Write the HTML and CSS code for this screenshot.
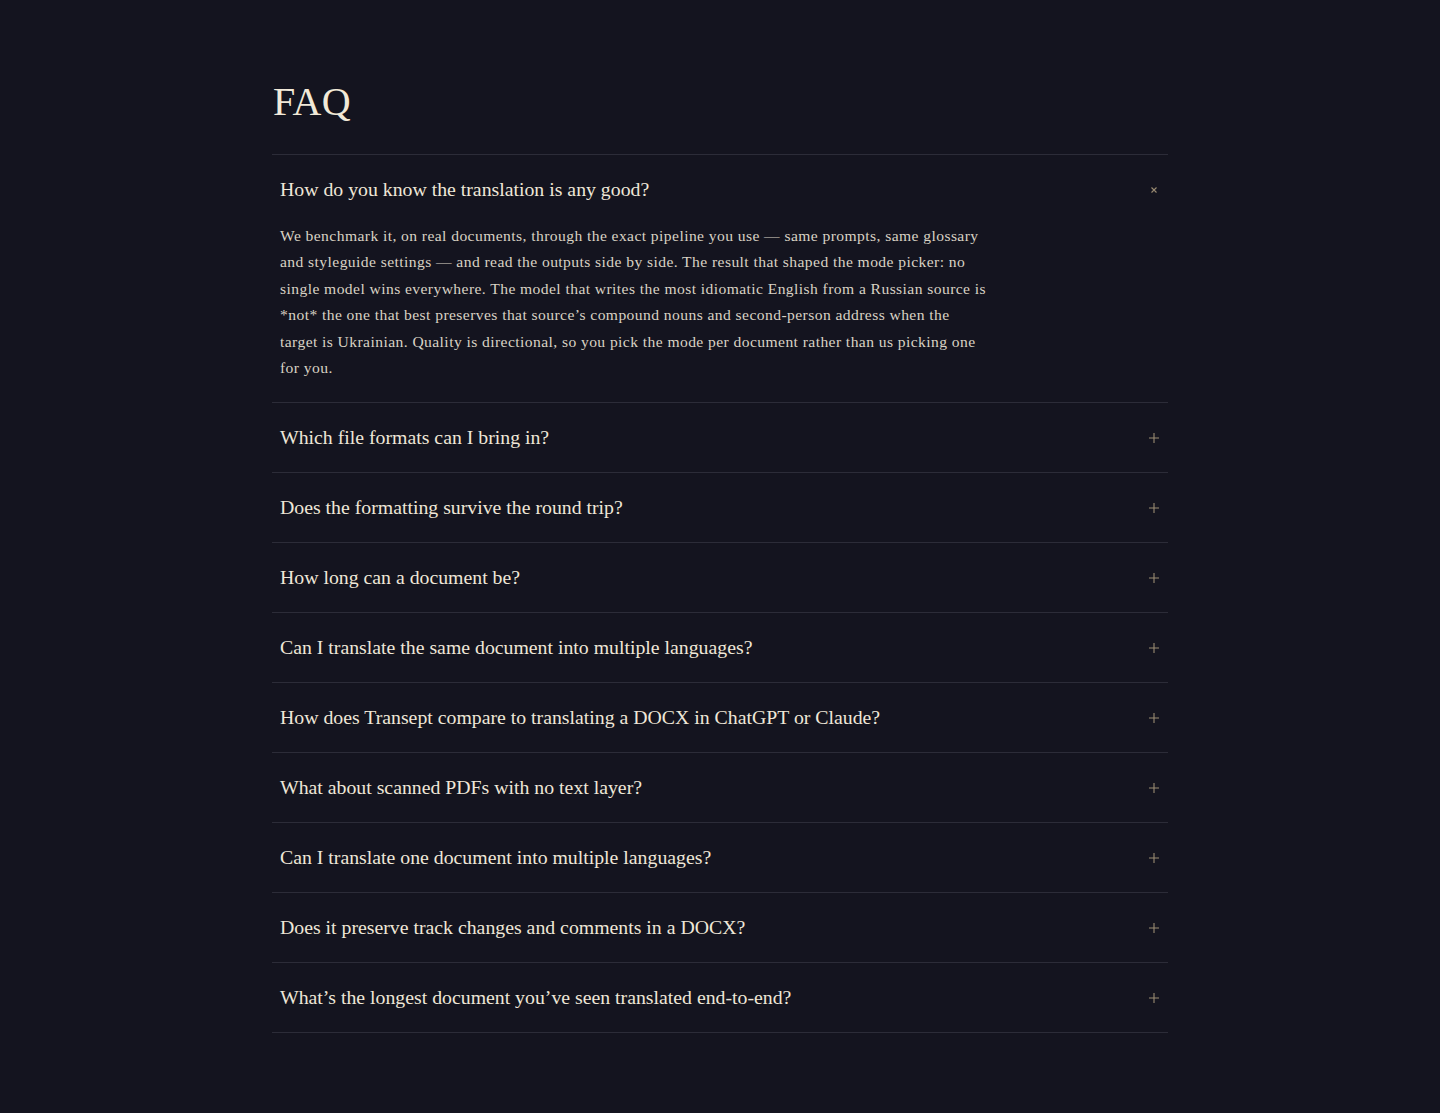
FILE: index.html
```html
<!DOCTYPE html>
<html lang="en">
<head>
<meta charset="utf-8">
<title>FAQ</title>
<link rel="stylesheet" href="styles.css">
</head>
<body>
<main class="faq">
  <h1 class="faq-title">FAQ</h1>
  <div class="faq-list">
    <div class="faq-item open">
      <div class="faq-q"><span>How do you know the translation is any good?</span>
        <svg class="icon" width="12" height="12" viewBox="0 0 12 12"><path d="M3.5 3.5L8.5 8.5M8.5 3.5L3.5 8.5"/></svg>
      </div>
      <p class="faq-a">We benchmark it, on real documents, through the exact pipeline you use — same prompts, same glossary and styleguide settings — and read the outputs side by side. The result that shaped the mode picker: no single model wins everywhere. The model that writes the most idiomatic English from a Russian source is *not* the one that best preserves that source’s compound nouns and second-person address when the target is Ukrainian. Quality is directional, so you pick the mode per document rather than us picking one for you.</p>
    </div>
    <div class="faq-item"><div class="faq-q"><span>Which file formats can I bring in?</span><svg class="icon" width="12" height="12" viewBox="0 0 12 12"><path d="M6 1V11M1 6H11"/></svg></div></div>
    <div class="faq-item"><div class="faq-q"><span>Does the formatting survive the round trip?</span><svg class="icon" width="12" height="12" viewBox="0 0 12 12"><path d="M6 1V11M1 6H11"/></svg></div></div>
    <div class="faq-item"><div class="faq-q"><span>How long can a document be?</span><svg class="icon" width="12" height="12" viewBox="0 0 12 12"><path d="M6 1V11M1 6H11"/></svg></div></div>
    <div class="faq-item"><div class="faq-q"><span>Can I translate the same document into multiple languages?</span><svg class="icon" width="12" height="12" viewBox="0 0 12 12"><path d="M6 1V11M1 6H11"/></svg></div></div>
    <div class="faq-item"><div class="faq-q"><span>How does Transept compare to translating a DOCX in ChatGPT or Claude?</span><svg class="icon" width="12" height="12" viewBox="0 0 12 12"><path d="M6 1V11M1 6H11"/></svg></div></div>
    <div class="faq-item"><div class="faq-q"><span>What about scanned PDFs with no text layer?</span><svg class="icon" width="12" height="12" viewBox="0 0 12 12"><path d="M6 1V11M1 6H11"/></svg></div></div>
    <div class="faq-item"><div class="faq-q"><span>Can I translate one document into multiple languages?</span><svg class="icon" width="12" height="12" viewBox="0 0 12 12"><path d="M6 1V11M1 6H11"/></svg></div></div>
    <div class="faq-item"><div class="faq-q"><span>Does it preserve track changes and comments in a DOCX?</span><svg class="icon" width="12" height="12" viewBox="0 0 12 12"><path d="M6 1V11M1 6H11"/></svg></div></div>
    <div class="faq-item"><div class="faq-q"><span>What’s the longest document you’ve seen translated end-to-end?</span><svg class="icon" width="12" height="12" viewBox="0 0 12 12"><path d="M6 1V11M1 6H11"/></svg></div></div>
  </div>
</main>
</body>
</html>
```

FILE: styles.css
```css
html, body {
  margin: 0;
  padding: 0;
  background: #14141f;
  color: #ede6d7;
  font-family: "Liberation Serif", "DejaVu Serif", serif;
}

.faq {
  width: 896px;
  margin: 0 auto;
  padding: 78px 0 80px;
}

.faq-title {
  margin: 0 0 0 1px;
  font-size: 40px;
  line-height: 48px;
  font-weight: 400;
  color: #f1e9d8;
  letter-spacing: 0.3px;
}

.faq-list {
  margin-top: 28px;
  border-top: 1px solid #2c2c38;
}

.faq-item {
  border-bottom: 1px solid #2c2c38;
}

.faq-q {
  display: flex;
  align-items: center;
  justify-content: space-between;
  height: 69px;
  padding: 0 8px;
  font-size: 19.8px;
  color: #efe7d8;
}

.icon {
  margin-right: 2px;
  fill: none;
  stroke: #9a8b72;
  stroke-width: 1.1;
  transform: translateX(2px);
}

.faq-a {
  margin: -1px 0 0;
  padding: 0 8px 21px;
  max-width: 709px;
  font-size: 15.6px;
  letter-spacing: 0.42px;
  line-height: 26.4px;
  color: #d9d2c4;
}
```
